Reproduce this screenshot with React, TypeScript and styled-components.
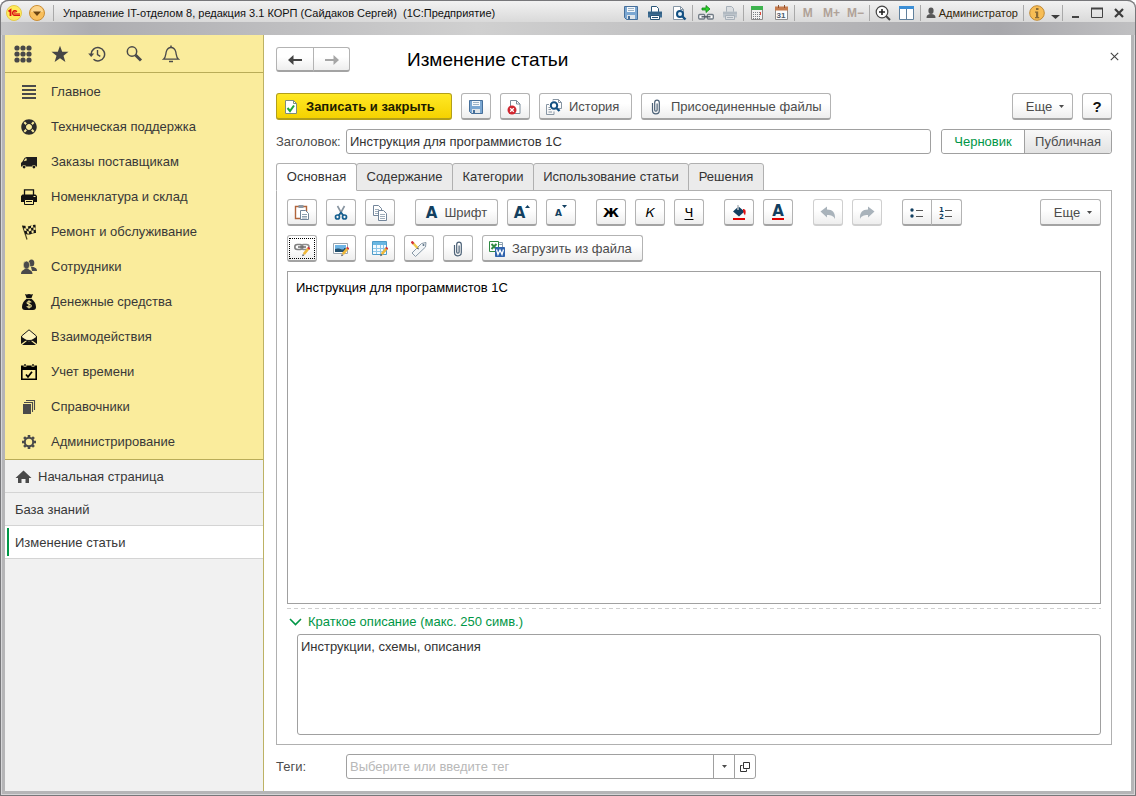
import React from "react";
import styled, { createGlobalStyle, css } from "styled-components";
import { FaLifeRing } from "react-icons/fa";

const GlobalStyle = createGlobalStyle`
  *, *::before, *::after { box-sizing: border-box; }
  body { margin: 0; background: #fff; }
  body, button, input, textarea {
    font-family: "Liberation Sans", Arial, sans-serif;
    font-size: 13px;
    line-height: 16px;
  }
  button { cursor: pointer; margin: 0; }
  svg { display: block; flex: none; }
`;

/* ---------- Window frame ---------- */

const Window = styled.div`
  min-height: 100vh;
  display: flex;
  flex-direction: column;
  padding: 0 5px 5px;
  border-radius: 8px 8px 0 0;
  background: #b5b5b7;
  box-shadow: inset 0 0 0 1px #77777a, inset 0 0 0 2px #d6d6d8;
`;

const TitleBar = styled.header`
  height: 35px;
  margin: 0 -4px;
  padding: 0 5px 10px;
  display: flex;
  align-items: center;
  border-top: 1px solid #77777a;
  border-radius: 8px 8px 0 0;
  background:
    linear-gradient(90deg, #c6c6c8, #adadb1 8%, #d0d0d0 42%, #a8a8ac 88%, #c0c0c2) bottom / 100% 13px no-repeat,
    linear-gradient(180deg, #f2f2f2, #cacaca);
`;

const WindowTitle = styled.h1`
  flex: 1;
  margin: 0 0 0 8px;
  min-width: 0;
  overflow: hidden;
  white-space: pre;
  font: 400 11px/16px "Liberation Sans", Arial, sans-serif;
  color: #111;
`;

const Divider = styled.span`
  width: 1px;
  height: 16px;
  margin: 0 1px;
  background: #a9a9a9;
`;

const BarButton = styled.button<{ $w?: number }>`
  width: ${(p) => p.$w ?? 24}px;
  height: 20px;
  padding: 0;
  border: 0;
  background: none;
  display: flex;
  align-items: center;
  justify-content: center;
  font-weight: 700;
  font-size: 12px;
  color: #b0a298;
`;

const UserButton = styled(BarButton)`
  width: auto;
  gap: 3px;
  padding: 0 4px;
  font-weight: 400;
  font-size: 11px;
  color: #33280c;
`;

/* ---------- Sidebar ---------- */

const Body = styled.div`
  flex: 1;
  display: flex;
  background: #fff;
`;

const Sidebar = styled.aside`
  width: 259px;
  flex: none;
  background: #f1f1f1;
  border-right: 1px solid #bdb264;
`;

const QuickBar = styled.div`
  height: 38px;
  padding: 0 8px;
  display: flex;
  gap: 17px;
  align-items: center;
  background: #faec9c;
  border-bottom: 1px solid #b9ac58;
`;

const QuickButton = styled.button`
  width: 20px;
  height: 24px;
  padding: 0;
  border: 0;
  background: none;
  color: #4a4a4a;
  display: flex;
  align-items: center;
  justify-content: center;
`;

const SectionNav = styled.nav`
  display: flex;
  flex-direction: column;
  padding-top: 1px;
  background: #faec9c;
  border-bottom: 1px solid #b9ac58;
`;

const SectionLink = styled.a`
  height: 35px;
  padding-left: 15px;
  display: flex;
  align-items: center;
  gap: 13px;
  color: #383838;
  text-decoration: none;
  svg { width: 18px; height: 18px; padding: 1px; }
`;

const PageLink = styled.a<{ $active?: boolean }>`
  height: 33px;
  padding: 2px 0 0 10px;
  display: flex;
  align-items: center;
  gap: 6px;
  border-bottom: 1px solid #d4d4d4;
  color: #383838;
  text-decoration: none;
  ${(p) =>
    p.$active &&
    css`
      background: linear-gradient(#009646, #009646) 2px center / 2px 28px no-repeat, #fff;
    `}
`;

/* ---------- Work area ---------- */

const Main = styled.main`
  flex: 1;
  min-width: 0;
  display: flex;
  flex-direction: column;
  padding: 12px 19px 12px 12px;
`;

const PageHead = styled.div`
  display: flex;
  align-items: flex-start;
  margin-bottom: 21px;
`;

const PageTitle = styled.h2`
  flex: 1;
  margin: 1px 0 0 57px;
  font-size: 19px;
  line-height: 24px;
  font-weight: 400;
  color: #000;
`;

const CloseButton = styled.button`
  width: 18px;
  height: 18px;
  margin-right: -11px;
  padding: 0;
  border: 0;
  background: none;
  display: flex;
  align-items: center;
  justify-content: center;
`;

const Group = styled.div`
  display: flex;
  & > button:not(:last-child) { border-top-right-radius: 0; border-bottom-right-radius: 0; }
  & > button:not(:first-child) { border-top-left-radius: 0; border-bottom-left-radius: 0; margin-left: -1px; }
`;

const Button = styled.button<{ $w?: number; $primary?: boolean; $short?: boolean; $icon?: boolean }>`
  width: ${(p) => (p.$w ? `${p.$w}px` : "30px")};
  height: ${(p) => (p.$short ? 25 : 27)}px;
  flex: none;
  padding: 1px 0 0 ${(p) => (p.$icon ? 6 : 0)}px;
  display: flex;
  align-items: center;
  justify-content: ${(p) => (p.$icon ? "flex-start" : "center")};
  gap: 7px;
  border: 1px solid #b3b3b3;
  border-bottom: 2px solid #a3a3a3;
  border-radius: 3px;
  background: linear-gradient(180deg, #fff 40%, #eee);
  color: #4c4c4c;
  white-space: nowrap;
  &:disabled { border-color: #cfcfcf; }
  ${(p) =>
    p.$primary &&
    css`
      border-color: #b29f1a;
      background: linear-gradient(180deg, #ffe926, #f5d200);
      color: #1c1c00;
      font-weight: 700;
    `}
`;

const MoreButton = styled(Button)`
  width: 61px;
  padding-left: 5px;
`;

const Bar = styled.div`
  display: flex;
  gap: 9px;
  margin-bottom: 9px;
`;

const Gap = styled.span<{ $grow?: boolean }>`
  width: 2px;
  flex: ${(p) => (p.$grow ? "1" : "none")};
`;

const Field = styled.div`
  display: flex;
  align-items: center;
`;

const TagsField = styled(Field)`
  margin-top: 9px;
`;

const Label = styled.label`
  width: 70px;
  flex: none;
  color: #4c4c4c;
`;

const TextInput = styled.input`
  flex: 1;
  min-width: 0;
  height: 25px;
  padding: 0 3px;
  border: 1px solid #a0a0a0;
  border-radius: 3px;
  background: #fff;
  color: #333;
  &::placeholder { color: #b8b8b8; opacity: 1; }
`;

const Toggle = styled.fieldset`
  margin: 0 0 0 10px;
  padding: 0;
  border: 1px solid #a0a0a0;
  border-radius: 3px;
  display: flex;
  height: 25px;
  overflow: hidden;
`;

const ToggleOption = styled.label<{ $w: number }>`
  width: ${(p) => p.$w}px;
  display: flex;
  align-items: center;
  justify-content: center;
  color: #4c4c4c;
  background: linear-gradient(180deg, #f8f8f8, #e2e2e2);
  cursor: pointer;
  & + & { border-left: 1px solid #a0a0a0; }
  &:has(input:checked) { background: #fff; color: #009646; }
  input { appearance: none; width: 0; height: 0; margin: 0; }
`;

const Tabs = styled.div`
  display: flex;
  margin-top: 9px;
`;

const Tab = styled.button<{ $w: number; $active?: boolean }>`
  width: ${(p) => p.$w}px;
  height: 28px;
  margin: 0 -1px -1px 0;
  padding: 0;
  border: 1px solid #b0b0b0;
  border-radius: 3px 3px 0 0;
  background: #ebebeb;
  color: #333;
  white-space: nowrap;
  ${(p) =>
    p.$active &&
    css`
      position: relative;
      background: #fff;
      border-bottom-color: #fff;
    `}
`;

const Panel = styled.section`
  flex: 1;
  display: flex;
  flex-direction: column;
  padding: 8px 10px 9px;
  border: 1px solid #b0b0b0;
`;

const Editor = styled.textarea`
  flex: 1;
  min-height: 160px;
  width: 100%;
  padding: 8px;
  border: 1px solid #a0a0a0;
  resize: none;
  background: #fff;
  color: #000;
`;

const GroupToggle = styled.button`
  height: 26px;
  margin-top: 4px;
  padding: 2px 2px 0;
  display: flex;
  align-items: center;
  gap: 6px;
  border: 0;
  background: linear-gradient(90deg, #cfcfcf 60%, transparent 0) top left / 7px 1px repeat-x;
  color: #009646;
`;

const Summary = styled.textarea`
  height: 101px;
  margin-left: 10px;
  padding: 4px 3px;
  border: 1px solid #a0a0a0;
  border-radius: 3px;
  resize: none;
  background: #fff;
  color: #333;
`;

const Combo = styled.div`
  display: flex;
  width: 410px;
  ${TextInput} { border-radius: 3px 0 0 3px; }
`;

const ComboButton = styled.button<{ $last?: boolean }>`
  width: 22px;
  height: 25px;
  margin-left: -1px;
  padding: 0;
  display: flex;
  align-items: center;
  justify-content: center;
  border: 1px solid #a0a0a0;
  border-radius: ${(p) => (p.$last ? "0 3px 3px 0" : "0")};
  background: #fff;
`;

const Glyph = styled.span<{ $size?: number; $dark?: boolean; $italic?: boolean; $under?: boolean; $bold?: boolean }>`
  font-family: "DejaVu Sans", sans-serif;
  font-size: ${(p) => p.$size ?? 14}px;
  font-weight: ${(p) => (p.$bold ? 700 : 400)};
  font-style: ${(p) => (p.$italic ? "italic" : "normal")};
  text-decoration: ${(p) => (p.$under ? "underline" : "none")};
  text-underline-offset: 2px;
  color: ${(p) => (p.$dark ? "#000" : "#123f60")};
`;

const HelpMark = styled(Glyph)`
  font-family: "Liberation Sans", Arial, sans-serif;
  font-size: 15px;
  font-weight: 700;
  color: #111;
`;

const Stack = styled.span`
  display: flex;
  align-items: flex-start;
`;

const Underbar = styled.span`
  display: flex;
  justify-content: center;
  border-bottom: 2px solid #e00000;
  width: 12px;
  padding-bottom: 1px;
  ${Glyph} { line-height: 12px; }
`;

const FocusRing = styled.span`
  width: 26px;
  height: 21px;
  display: flex;
  align-items: center;
  justify-content: center;
  border: 1px dotted #000;
`;

/* ---------- Icons ---------- */

type IconProps = { w?: number; h?: number; vb?: string; children: React.ReactNode };
const Icon = ({ w = 16, h = 16, vb, children }: IconProps) => (
  <svg width={w} height={h} viewBox={vb ?? `0 0 ${w} ${h}`} fill="none" aria-hidden="true">
    {children}
  </svg>
);

const Caret = ({ color = "#4c4c4c" }) => (
  <Icon w={5} h={3}><path d="M0 0h5L2.500 3z" fill={color} /></Icon>
);
const CaretUp = () => (
  <Icon w={5} h={3}><path d="M0 3h5L2.500 0z" fill="#123f60" /></Icon>
);
const BigCaret = () => (
  <Icon w={9} h={12}><path d="M0 8h9l-4.500 4z" fill="#3d3d3d" /></Icon>
);

const Logo = () => (
  <Icon>
    <circle cx="8" cy="8" r="7.500" fill="#ffec5c" stroke="#e5c94a" />
    <path d="M2.500 6.500 4.500 5v6" stroke="#dc1414" strokeWidth="1.800" />
    <path d="M10.800 6.800A2.300 2.300 0 1 0 8.500 10.300H14" stroke="#dc1414" strokeWidth="1.400" />
    <path d="M9.700 7.600a.9.9 0 1 0-1 1.200H14" stroke="#dc1414" strokeWidth=".8" />
  </Icon>
);

const MenuBall = () => (
  <Icon>
    <circle cx="8" cy="8" r="7.500" fill="#f8bf5c" stroke="#c98d35" />
    <path d="M2 7a6 6 0 0 1 12 0z" fill="#fcd58c" />
    <path d="M4 6.500h8l-4 4.500z" fill="#6a4412" />
  </Icon>
);

const Disk = () => (
  <Icon>
    <path d="M1.500 1.500h13v13h-11l-2-2z" fill="#7ba7d2" stroke="#466f9a" />
    <path d="M4 2h8v5H4z" fill="#f4f8fb" />
    <path d="M5 3.500h6M5 5.500h6" stroke="#9eb3c6" />
    <path d="M4 10h8v4H4z" fill="#dfe5ea" />
    <path d="M5 11h2v3H5z" fill="#466f9a" />
  </Icon>
);

const PrinterBlue = ({ off = false }) => {
  const dark = off ? "#a7b0b9" : "#2a5678";
  return (
    <Icon>
      <path d="M4.500 7V1.500h5l2 2V7" fill={off ? "#dcdfe2" : "#fff"} stroke={dark} />
      <path d="M1 6.500h14v6H1z" fill={off ? "#bcc4cb" : "#3d6c92"} />
      <path d="M1 8h14" stroke={dark} />
      <path d="M3.500 10.500h9v4h-9z" fill={off ? "#dcdfe2" : "#fff"} stroke={dark} />
      <path d="M5 12.500h6" stroke={dark} />
    </Icon>
  );
};

const Preview = () => (
  <Icon>
    <path d="M2.500 1.500h7l3 3v10h-10z" fill="#fff" stroke="#8797a5" />
    <path d="M9.500 1.500v3h3" stroke="#8797a5" />
    <circle cx="9" cy="9" r="3" fill="#e4f1fa" stroke="#125082" strokeWidth="2" />
    <path d="m11.500 11.500 3 3" stroke="#125082" strokeWidth="2.400" />
  </Icon>
);

const LinkGo = () => (
  <Icon>
    <path d="M4 3h4V.5L12 4 8 7.500V5H4z" fill="#2bd42b" stroke="#14811a" strokeWidth=".8" />
    <rect x=".7" y="9.500" width="6" height="4.500" rx="1" fill="#fff" stroke="#6f7a84" strokeWidth="1.300" />
    <rect x="9.300" y="9.500" width="6" height="4.500" rx="1" fill="#fff" stroke="#6f7a84" strokeWidth="1.300" />
    <path d="M3.500 11.800h9" stroke="#4e5963" strokeWidth="1.400" />
  </Icon>
);

const Calculator = () => (
  <Icon>
    <path d="M2.500 1.500h11v13h-11z" fill="#f2f2f2" stroke="#8b8b8b" />
    <path d="M2 1h12v4H2z" fill="#3eb34e" />
    <path d="M4 7.500h8M4 9.500h8M4 11.500h8M4 13.500h8" stroke="#7a7f85" strokeDasharray="1 1" />
    <path d="M11.500 7v3" stroke="#e04a3a" />
  </Icon>
);

const Calendar31 = () => (
  <Icon>
    <path d="M2.500 2.500h12v12h-12z" fill="#fbfbfb" stroke="#8d8d8d" />
    <path d="M2 1.500h13v4H2z" fill="#c67b4d" />
    <path d="M5.500 0v3M11.500 0v3" stroke="#8d5230" />
    <text x="8" y="13" textAnchor="middle" fontSize="8" fontFamily="Liberation Sans" fontWeight="700" fill="#4a5a6c">31</text>
  </Icon>
);

const ZoomPlus = () => (
  <Icon>
    <circle cx="7" cy="7" r="5.800" fill="#fdfdfd" stroke="#454545" strokeWidth="1.200" />
    <path d="M7 4v6M4 7h6" stroke="#222" strokeWidth="1.600" />
    <path d="m11 11 4 4" stroke="#454545" strokeWidth="2" />
  </Icon>
);

const Columns = () => (
  <Icon>
    <path d="M.5 1.500h14v13H.5z" fill="#fff" stroke="#60809c" />
    <path d="M0 1h15v3H0z" fill="#3c8fd6" />
    <path d="M7.500 4v11" stroke="#60809c" />
  </Icon>
);

const UserSmall = () => (
  <Icon w={10} h={12}>
    <ellipse cx="5" cy="3.800" rx="2.600" ry="3.300" fill="#575757" />
    <path d="M.5 11c0-3 1.500-4 4.500-4s4.500 1 4.500 4z" fill="#575757" />
  </Icon>
);

const Info = () => (
  <Icon>
    <circle cx="8" cy="8" r="7.300" fill="#f7bd55" stroke="#c08a35" />
    <path d="M7 3h2.500v2H7zM6 6.500h3.200V12h1v1.200H6V12h1V7.700H6z" fill="#8a6a35" />
  </Icon>
);

const DocCheck = () => (
  <Icon>
    <path d="M2.500 1.500h8l3 3v10h-11z" fill="#fff" stroke="#7c8d80" />
    <path d="M10.500 1.500v3h3" stroke="#7c8d80" />
    <path d="m4.500 9 2.500 3 4-5.500" stroke="#1fa63a" strokeWidth="2" />
  </Icon>
);

const DocCancel = () => (
  <Icon>
    <path d="M3.500 9V1.500h6l3.500 3.500v9.500H8" fill="#fff" stroke="#7b8c9b" />
    <path d="M9.500 1.500v3.500H13" stroke="#7b8c9b" />
    <circle cx="5" cy="11" r="4.500" fill="#cf2630" />
    <path d="m3.200 9.200 3.600 3.600m0-3.600-3.600 3.600" stroke="#fff" strokeWidth="1.300" />
  </Icon>
);

const History = () => (
  <Icon>
    <path d="M7 1.500V.5h5.500l3 3v6h-3M12.500.5v3h3" stroke="#8795a3" />
    <path d="M3 5.500H.5v10h7.500v-3M2.500 8.500H4M2.500 10.500H5M2.500 13H6" stroke="#8795a3" />
    <circle cx="8" cy="6.500" r="3.200" fill="#fff" stroke="#124f80" strokeWidth="2" />
    <path d="m10.500 9 3 3" stroke="#124f80" strokeWidth="2.400" />
  </Icon>
);

const Clip = () => (
  <Icon>
    <path d="M4.500 4v7.500a3.300 3.300 0 0 0 6.800 0V3.500a2.300 2.300 0 0 0-4.600 0V11a1.200 1.200 0 0 0 2.400 0V4.500" stroke="#4a6076" strokeWidth="1.200" />
  </Icon>
);

const Paste = () => (
  <Icon>
    <path d="M1.500 1.500h11v12h-11z" fill="#fff" stroke="#b0643a" strokeWidth="1.400" />
    <path d="M4.500 0h5v3h-5z" fill="#8d98a3" />
    <path d="M6.500 5.500h5l3 3v6h-8z" fill="#fff" stroke="#72859a" />
    <path d="M8 9.500h5M8 11.500h5M8 13h5" stroke="#8fa0b0" />
  </Icon>
);

const Scissors = () => (
  <Icon>
    <path d="m4.500 1 5 9M11.500 1l-5 9" stroke="#8794a0" strokeWidth="1.600" />
    <circle cx="4.500" cy="12" r="2" stroke="#176090" strokeWidth="1.700" />
    <circle cx="11.500" cy="12" r="2" stroke="#176090" strokeWidth="1.700" />
    <path d="m5.500 10.500 2.500-3 2.500 3" stroke="#176090" strokeWidth="1.600" />
  </Icon>
);

const Copy = () => (
  <Icon>
    <path d="M1.500.5h5l3 3v7h-8z" fill="#fff" stroke="#72859a" />
    <path d="M3 4.500h4M3 6.500h5M3 8.500h5" stroke="#a0aebb" />
    <path d="M6.500 5.500h5l3 3v7h-8z" fill="#fff" stroke="#72859a" />
    <path d="M8 9.500h5M8 11.500h5M8 13.500h5" stroke="#a0aebb" />
  </Icon>
);

const Bucket = () => (
  <Icon>
    <path d="m7.500 1.500 6 5-5.500 5-6-5z" fill="#123f60" />
    <path d="M7 0v5" stroke="#b9bfc5" strokeWidth="1.600" />
    <path d="M12 4c2.500 0 3.500 2 2 6.500-.5-1.500-2-2-2-6.500z" fill="#e01010" />
    <path d="M2 13h12v2H2z" fill="#e00000" />
  </Icon>
);

const Undo = () => (
  <Icon>
    <path d="M.5 6.500 7 1.500v3c5.500 0 8.500 3 8 9.500-1.500-3-3.500-4-8-4v2.500z" fill="#a9b3bb" />
  </Icon>
);
const Redo = () => (
  <Icon>
    <path d="M15.500 6.500 9 1.500v3c-5.500 0-8.500 3-8 9.500 1.500-3 3.500-4 8-4v2.500z" fill="#a9b3bb" />
  </Icon>
);

const Bullets = () => (
  <Icon>
    <circle cx="3" cy="5" r="1.700" fill="#123f60" /><circle cx="3" cy="11" r="1.700" fill="#123f60" />
    <path d="M7 5.500h7M7 11.500h7" stroke="#555" />
  </Icon>
);
const Numbers = () => (
  <Icon>
    <text x="0" y="7" fontSize="7" fontWeight="700" fontFamily="DejaVu Sans" fill="#123f60">1</text>
    <text x="0" y="14" fontSize="7" fontWeight="700" fontFamily="DejaVu Sans" fill="#123f60">2</text>
    <path d="M6 5.500h7M6 11.500h7" stroke="#555" />
  </Icon>
);

const Pencil = () => (
  <>
    <path d="m14.500 7.500-4.700 5.700" stroke="#efb83a" strokeWidth="2.600" />
    <path d="m15.300 6.500-1 1.300" stroke="#d2323c" strokeWidth="2.800" />
    <path d="m8.200 15.300.6-2.300 1.600 1.200z" fill="#4a4a4a" />
  </>
);
const LinkEdit = () => (
  <Icon>
    <rect x=".8" y="3.500" width="8" height="5" rx="2.500" stroke="#808080" strokeWidth="1.600" />
    <rect x="7" y="3.500" width="8" height="5" rx="2.500" stroke="#8e8e8e" strokeWidth="1.600" />
    <path d="M4 6h8" stroke="#6c6c6c" strokeWidth="1.500" />
    <Pencil />
  </Icon>
);
const ImageEdit = () => (
  <Icon>
    <path d="M.5 2.500h14v10H.5z" fill="#fff" stroke="#9aa6b0" />
    <path d="M2 4h11v4H2z" fill="#6eb4e4" /><path d="M2 8c4-2 8 2 11-1v4H2z" fill="#22506e" />
    <Pencil />
  </Icon>
);
const TableEdit = () => (
  <Icon>
    <path d="M.5.500h14v13H.5z" fill="#f3fafe" stroke="#4f9cc8" />
    <path d="M1 1h13v3H1z" fill="#69b7e2" />
    <path d="M1 7.500h13M1 10.500h13M4.500 4v9M8.500 4v9M11.500 4v9" stroke="#8cc6e8" />
    <Pencil />
  </Icon>
);
const TagEdit = () => (
  <Icon>
    <path d="M1 12 10.500 2.500l4.500-1-.5 4.500-10 9.500z" fill="#f3f6f8" stroke="#8798a6" />
    <circle cx="12.500" cy="4" r="1" fill="#5b7285" />
    <path d="m1.500 1.500 5 5.500" stroke="#efc84a" strokeWidth="2.400" />
    <path d="m.5.500 2 2.200" stroke="#d2323c" strokeWidth="2.400" />
    <path d="m8 8.500-2.200-1 1.300-1.200z" fill="#444" />
  </Icon>
);
const OfficeFiles = () => (
  <Icon>
    <path d="M.5.500h9v10h-9z" fill="#fff" stroke="#2f8a43" />
    <path d="m2.500 3 5 5m0-5-5 5" stroke="#2f8a43" strokeWidth="2" />
    <path d="M10 1.500h3.500V6M10 3.500h3" stroke="#8ca0b0" />
    <path d="M6.500 6.500h9v9h-9z" fill="#2f62ad" stroke="#2f62ad" />
    <path d="m7.500 8.500 1.500 5 2-4.500 2 4.500 1.500-5" stroke="#fff" strokeWidth="1.300" />
  </Icon>
);

const DotsGrid = () => (
  <Icon w={18} h={18}>
    {[3, 9, 15].map((y) => [3, 9, 15].map((x) => <circle key={`${x}-${y}`} cx={x} cy={y} r="2.600" fill="#484848" />))}
  </Icon>
);
const Star = () => (
  <Icon w={18} h={18}><path d="m9 .8 2.200 6h6.300l-5 3.900 1.900 6.300L9 13.300 3.600 17l1.900-6.300-5-3.900h6.300z" fill="#454545" /></Icon>
);
const Clock = () => (
  <Icon w={18} h={18}>
    <path d="M3.200 9.500a6.700 6.700 0 1 1 2.300 4.800" stroke="#4a4a4a" strokeWidth="1.500" />
    <path d="M.2 8.500h6L3.200 12z" fill="#4a4a4a" />
    <path d="M9.500 5v4.500l2.800 1.800" stroke="#4a4a4a" strokeWidth="1.400" />
  </Icon>
);
const Search = () => (
  <Icon w={18} h={18}>
    <circle cx="7" cy="6.500" r="4.700" stroke="#4a4a4a" strokeWidth="1.500" />
    <path d="m10.500 10 5.500 5.500" stroke="#4a4a4a" strokeWidth="3" />
  </Icon>
);
const Bell = () => (
  <Icon w={18} h={18}>
    <path d="M1.500 14.200c2.500-2 2-4.500 2.800-7.500C5 4 6.500 2.500 9 2.500S13 4 13.700 6.700c.8 3 .3 5.500 2.800 7.500z" stroke="#4a4a4a" strokeWidth="1.300" />
    <path d="M9 .5v2M7 16.500h4" stroke="#4a4a4a" strokeWidth="1.500" />
  </Icon>
);

const MenuLines = () => (
  <Icon><path d="M1 2h14M1 6h14M1 10h14M1 14h14" stroke="#4a4a4a" strokeWidth="2" /></Icon>
);
const Van = () => (
  <Icon>
    <path d="M5.500 3H16v9.500h-1.200a2 2 0 0 0-3.800 0H5a2 2 0 0 0-3.800 0H0V9l1.500-1.500L3.500 4z" fill="#1d1d1d" />
    <path d="M2.800 7.300 4.300 4.500h1.400v2z" fill="#faec9c" />
    <circle cx="3.100" cy="13" r="1.400" fill="#1d1d1d" /><circle cx="12.900" cy="13" r="1.400" fill="#1d1d1d" />
  </Icon>
);
const Printer = () => (
  <Icon>
    <path d="M3.500 6V.8h9V6" stroke="#111" strokeWidth="1.300" />
    <path d="M1.500 5.500h13L16 7v6H0V7z" fill="#111" />
    <path d="M3.500 10.500h9v5h-9z" fill="#faec9c" stroke="#111" />
    <path d="M5 12.500h6" stroke="#111" />
    <path d="M12.500 7.500h2" stroke="#faec9c" />
  </Icon>
);
const Flag = () => (
  <Icon>
    <path d="m1.500 1.500 4.500 14" stroke="#4a4520" strokeWidth="1.200" />
    <path d="M1.500 2c2.500-1 4 1 6.500.3S11.500.5 14.500.8L15 9c-3-.2-4 1-6 1.500S6 9.500 4.500 10.500z" fill="#151515" />
    <path d="m4.500 1.800 2.500.5.300 2.500-2.500-.4zM10 1.500l2-.5.300 2.400-2.200.6zM2.800 4.200l2.200.3.600 2.500-2.200-.2zM7.500 4.900l2.500-.8.300 2.500-2.400.8zM12.400 3.500l2-.1.200 2.400-2.100.2zM5.800 7l2 .5.400 2.300-1.900-.3zM10.400 6.800l2.100-.6.300 2.400-2 .7z" fill="#faec9c" />
  </Icon>
);
const People = () => (
  <Icon>
    <ellipse cx="10.500" cy="4" rx="2.800" ry="3.600" fill="#4a4a4a" />
    <path d="M10 8h2.500c2 1 3.500 1.200 3.500 4h-5z" fill="#4a4a4a" />
    <ellipse cx="5.500" cy="6" rx="3.300" ry="4" fill="#4a4a4a" stroke="#faec9c" strokeWidth=".7" />
    <path d="M4 9.500h3c0 1.500 4.500 1 4.500 5.500H0c0-4.500 4-4 4-5.500z" fill="#4a4a4a" />
  </Icon>
);
const MoneyBag = () => (
  <Icon>
    <path d="M4 0c2 1 2.500 0 4 0s2 1 4 0l-1.500 4h-5z" fill="#111" />
    <path d="M5.500 4.800h5C13 7 15 9.500 15 13c0 2-1 3-3 3H4c-2 0-3-1-3-3 0-3.500 2-6 4.500-8.200z" fill="#111" />
    <path d="M10.300 8.300C9 7 5.900 7.300 6 9c.1 1.600 4.200.9 4.300 2.700.1 1.800-3.200 2-4.600.6M8 6.300v8.200" stroke="#faec9c" strokeWidth="1.100" />
  </Icon>
);
const Mail = () => (
  <Icon>
    <path d="M.6 7 8 .8 15.400 7v4L8 11.500.6 11z" fill="#fdf4bd" stroke="#1b1b1b" />
    <path d="M0 7.500 5.500 11 0 15zM16 7.500 10.500 11l5.500 4zM1 16l5.500-4.500L8 12.500l1.500-1L15 16z" fill="#151515" />
  </Icon>
);
const CalendarCheck = () => (
  <Icon>
    <path d="M.8 2.800h14.400v12.400H.8z" stroke="#000" strokeWidth="1.600" />
    <path d="M0 1.500h16V6H0z" fill="#000" />
    <path d="M4 0v3M12 0v3" stroke="#faec9c" strokeWidth="2.600" />
    <path d="M4 0v2.500M12 0v2.500" stroke="#000" strokeWidth="1.300" />
    <path d="m5 10.500 2 2.300 4-5" stroke="#000" strokeWidth="1.700" />
  </Icon>
);
const Books = () => (
  <Icon>
    <path d="M2 5h8v10H2z" fill="#4a4a4a" />
    <path d="M3 3.500h8.500V13M5 1.500h8.500V11" stroke="#4a4a4a" strokeWidth="1.100" />
  </Icon>
);
const Gear = () => (
  <Icon>
    <circle cx="8" cy="8" r="4.200" stroke="#4a4a4a" strokeWidth="2" />
    {[0, 45, 90, 135, 180, 225, 270, 315].map((a) => (
      <path key={a} d="M8 1v2.800" stroke="#4a4a4a" strokeWidth="2.600" transform={`rotate(${a} 8 8)`} />
    ))}
  </Icon>
);
const Home = () => (
  <Icon w={17} h={16}>
    <path d="M8.500 1.500 16.500 9H14v5h-3.500v-4h-4v4H3V9H.5z" fill="#4a4a4a" />
  </Icon>
);

const Arrow = ({ back = false }) => (
  <Icon w={14} h={12}>
    {back ? (
      <path d="M0 6 5.500 1v4H14v2H5.500v4z" fill="#444" />
    ) : (
      <path d="M14 6 8.500 1v4H0v2h8.500v4z" fill="#a6a6a6" />
    )}
  </Icon>
);

/* ---------- Data ---------- */

const sections: [string, React.ReactNode][] = [
  ["Главное", <MenuLines />],
  ["Техническая поддержка", <FaLifeRing color="#2b2b2b" />],
  ["Заказы поставщикам", <Van />],
  ["Номенклатура и склад", <Printer />],
  ["Ремонт и обслуживание", <Flag />],
  ["Сотрудники", <People />],
  ["Денежные средства", <MoneyBag />],
  ["Взаимодействия", <Mail />],
  ["Учет времени", <CalendarCheck />],
  ["Справочники", <Books />],
  ["Администрирование", <Gear />],
];

const tabs: [string, number][] = [
  ["Основная", 81],
  ["Содержание", 97],
  ["Категории", 82],
  ["Использование статьи", 156],
  ["Решения", 76],
];

/* ---------- Page ---------- */

export default function App() {
  return (
    <>
      <GlobalStyle />
      <Window>
        <TitleBar>
          <Logo />
          <BarButton $w={30} aria-label="Главное меню"><MenuBall /></BarButton>
          <Divider />
          <WindowTitle>Управление IT-отделом 8, редакция 3.1 КОРП (Сайдаков Сергей)  (1С:Предприятие)</WindowTitle>
          <BarButton aria-label="Сохранить"><Disk /></BarButton>
          <BarButton aria-label="Печать"><PrinterBlue /></BarButton>
          <BarButton aria-label="Просмотр"><Preview /></BarButton>
          <Divider />
          <BarButton aria-label="Перейти по ссылке"><LinkGo /></BarButton>
          <BarButton aria-label="Печать ссылки" disabled><PrinterBlue off /></BarButton>
          <Divider />
          <BarButton aria-label="Калькулятор"><Calculator /></BarButton>
          <BarButton aria-label="Календарь"><Calendar31 /></BarButton>
          <Divider />
          <BarButton>M</BarButton>
          <BarButton>M+</BarButton>
          <BarButton>M−</BarButton>
          <Divider />
          <BarButton aria-label="Масштаб"><ZoomPlus /></BarButton>
          <BarButton aria-label="Панели"><Columns /></BarButton>
          <Divider />
          <UserButton><UserSmall />Администратор</UserButton>
          <Divider />
          <BarButton aria-label="Справка"><Info /></BarButton>
          <BarButton $w={12} aria-label="Ещё команды"><BigCaret /></BarButton>
          <Divider />
          <BarButton $w={22} aria-label="Свернуть"><Icon w={12} h={12}><path d="M3 10h7" stroke="#444" strokeWidth="2" /></Icon></BarButton>
          <BarButton $w={22} aria-label="Развернуть"><Icon w={12} h={12}><path d="M.5 1.500h11v9H.5z" stroke="#444" /><path d="M0 1.500h12" stroke="#444" strokeWidth="2" /></Icon></BarButton>
          <BarButton $w={22} aria-label="Закрыть окно"><Icon w={12} h={12}><path d="m2 2 8 8m0-8-8 8" stroke="#3c3c3c" strokeWidth="2.200" /></Icon></BarButton>
        </TitleBar>

        <Body>
          <Sidebar>
            <QuickBar>
              <QuickButton aria-label="Меню функций"><DotsGrid /></QuickButton>
              <QuickButton aria-label="Избранное"><Star /></QuickButton>
              <QuickButton aria-label="История"><Clock /></QuickButton>
              <QuickButton aria-label="Поиск"><Search /></QuickButton>
              <QuickButton aria-label="Оповещения"><Bell /></QuickButton>
            </QuickBar>
            <SectionNav>
              {sections.map(([name, icon]) => (
                <SectionLink href="#" key={name}>{icon}{name}</SectionLink>
              ))}
            </SectionNav>
            <nav>
              <PageLink href="#"><Home />Начальная страница</PageLink>
              <PageLink href="#">База знаний</PageLink>
              <PageLink href="#" $active>Изменение статьи</PageLink>
            </nav>
          </Sidebar>

          <Main>
            <PageHead>
              <Group>
                <Button $short $w={38} aria-label="Назад"><Arrow back /></Button>
                <Button $short $w={37} aria-label="Вперед"><Arrow /></Button>
              </Group>
              <PageTitle>Изменение статьи</PageTitle>
              <CloseButton aria-label="Закрыть"><Icon w={9} h={9}><path d="m.8.8 7.400 7.400m0-7.400L.8 8.200" stroke="#444" strokeWidth="1.100" /></Icon></CloseButton>
            </PageHead>

            <Bar>
              <Button $primary $icon $w={176}><DocCheck />Записать и закрыть</Button>
              <Button aria-label="Записать"><Disk /></Button>
              <Button aria-label="Отменить"><DocCancel /></Button>
              <Button $icon $w={93}><History />История</Button>
              <Button $icon $w={190}><Clip />Присоединенные файлы</Button>
              <Gap $grow />
              <MoreButton>Еще<Caret /></MoreButton>
              <Button><HelpMark>?</HelpMark></Button>
            </Bar>

            <Field>
              <Label htmlFor="heading">Заголовок:</Label>
              <TextInput id="heading" defaultValue="Инструкция для программистов 1С" />
              <Toggle aria-label="Статус статьи">
                <ToggleOption $w={82}><input type="radio" name="status" defaultChecked />Черновик</ToggleOption>
                <ToggleOption $w={87}><input type="radio" name="status" />Публичная</ToggleOption>
              </Toggle>
            </Field>

            <Tabs role="tablist">
              {tabs.map(([name, w], i) => (
                <Tab key={name} role="tab" aria-selected={i === 0} $w={w} $active={i === 0}>{name}</Tab>
              ))}
            </Tabs>

            <Panel>
              <Bar>
                <Button aria-label="Вставить"><Paste /></Button>
                <Button aria-label="Вырезать"><Scissors /></Button>
                <Button aria-label="Копировать"><Copy /></Button>
                <Gap />
                <Button $w={83}><Glyph $bold $size={15}>A</Glyph>Шрифт</Button>
                <Button aria-label="Увеличить шрифт"><Stack><Glyph $bold $size={15}>A</Glyph><CaretUp /></Stack></Button>
                <Button aria-label="Уменьшить шрифт"><Stack><Glyph $bold $size={9}>A</Glyph><Caret color="#123f60" /></Stack></Button>
                <Gap />
                <Button><Glyph $bold $dark $size={13}>Ж</Glyph></Button>
                <Button><Glyph $italic $dark $size={13}>К</Glyph></Button>
                <Button><Glyph $under $dark $size={13}>Ч</Glyph></Button>
                <Gap />
                <Button aria-label="Цвет фона"><Bucket /></Button>
                <Button aria-label="Цвет текста"><Underbar><Glyph $bold $size={15}>A</Glyph></Underbar></Button>
                <Gap />
                <Button disabled aria-label="Отменить действие"><Undo /></Button>
                <Button disabled aria-label="Вернуть действие"><Redo /></Button>
                <Gap />
                <Group>
                  <Button aria-label="Маркированный список"><Bullets /></Button>
                  <Button $w={31} aria-label="Нумерованный список"><Numbers /></Button>
                </Group>
                <Gap $grow />
                <MoreButton>Еще<Caret /></MoreButton>
              </Bar>
              <Bar>
                <Button aria-label="Вставить ссылку"><FocusRing><LinkEdit /></FocusRing></Button>
                <Button aria-label="Вставить картинку"><ImageEdit /></Button>
                <Button aria-label="Вставить таблицу"><TableEdit /></Button>
                <Button aria-label="Вставить метку"><TagEdit /></Button>
                <Button aria-label="Вложить файл"><Clip /></Button>
                <Button $icon $w={161}><OfficeFiles />Загрузить из файла</Button>
              </Bar>
              <Editor aria-label="Текст статьи" defaultValue="Инструкция для программистов 1С" />
              <GroupToggle aria-expanded="true">
                <Icon w={13} h={8}><path d="m1 1 5.500 5.500L12 1" stroke="#009646" strokeWidth="1.600" /></Icon>
                Краткое описание (макс. 250 симв.)
              </GroupToggle>
              <Summary aria-label="Краткое описание" defaultValue="Инструкции, схемы, описания" />
            </Panel>

            <TagsField>
              <Label htmlFor="tags">Теги:</Label>
              <Combo>
                <TextInput id="tags" placeholder="Выберите или введите тег" />
                <ComboButton aria-label="Выбрать из списка"><Caret /></ComboButton>
                <ComboButton $last aria-label="Открыть список">
                  <Icon w={10} h={10}><path d="M3.500.5h6v6h-6zM2.500 3.500h-2v6h6v-2" stroke="#333" /></Icon>
                </ComboButton>
              </Combo>
            </TagsField>
          </Main>
        </Body>
      </Window>
    </>
  );
}
